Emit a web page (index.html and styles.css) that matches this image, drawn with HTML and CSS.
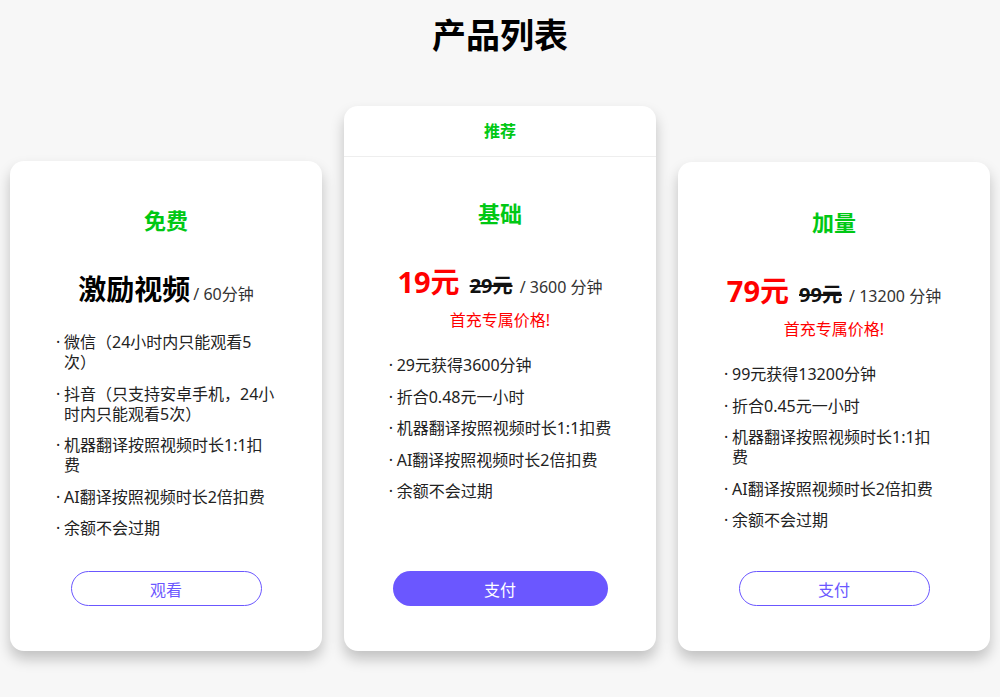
FILE: index.html
```html
<!DOCTYPE html>
<html lang="zh-CN">
<head>
<meta charset="UTF-8">
<meta name="viewport" content="width=device-width, initial-scale=1.0">
<title>产品列表</title>
<link rel="stylesheet" href="styles.css">
</head>
<body>

<h1 class="page-title">产品列表</h1>

<div class="plans">
    <div class="plan">
        <div class="plan-body">
            <h3 class="plan-name">免费</h3>
            <div class="plan-price">
                <span class="plan-reward">激励视频</span><span class="price-unit">/ 60分钟</span>
            </div>
            <ul class="plan-features">
                <li>微信（24小时内只能观看5次）</li>
                <li>抖音（只支持安卓手机，24小时内只能观看5次）</li>
                <li>机器翻译按照视频时长1:1扣费</li>
                <li>AI翻译按照视频时长2倍扣费</li>
                <li>余额不会过期</li>
            </ul>
            <button class="btn btn-outline">观看</button>
        </div>
    </div>

    <div class="plan plan-featured">
        <div class="plan-badge">推荐</div>
        <div class="plan-body">
            <h3 class="plan-name">基础</h3>
            <div class="plan-price">
                <span class="price-now">19元</span><span class="price-old">29元</span><span class="price-unit"> / 3600 分钟</span>
            </div>
            <div class="plan-note">首充专属价格!</div>
            <ul class="plan-features">
                <li>29元获得3600分钟</li>
                <li>折合0.48元一小时</li>
                <li>机器翻译按照视频时长1:1扣费</li>
                <li>AI翻译按照视频时长2倍扣费</li>
                <li>余额不会过期</li>
            </ul>
            <button class="btn btn-solid">支付</button>
        </div>
    </div>

    <div class="plan plan-plus">
        <div class="plan-body">
            <h3 class="plan-name">加量</h3>
            <div class="plan-price">
                <span class="price-now">79元</span><span class="price-old">99元</span><span class="price-unit"> / 13200 分钟</span>
            </div>
            <div class="plan-note">首充专属价格!</div>
            <ul class="plan-features">
                <li>99元获得13200分钟</li>
                <li>折合0.45元一小时</li>
                <li>机器翻译按照视频时长1:1扣费</li>
                <li>AI翻译按照视频时长2倍扣费</li>
                <li>余额不会过期</li>
            </ul>
            <button class="btn btn-outline">支付</button>
        </div>
    </div>
</div>

</body>
</html>
```

FILE: styles.css
```css
body {
    font-family: "Noto Sans", "Noto Sans CJK SC", sans-serif;
    background-color: #f7f7f7;
    color: #222;
    margin: 0;
    padding: 0;
    text-spacing-trim: space-all;
}
.page-title {
    margin: 13px 0 0;
    font-size: 34px;
    line-height: 44px;
    font-weight: bold;
    color: #000;
    text-align: center;
}
.plans {
    display: flex;
    align-items: flex-end;
    gap: 22px;
    padding: 0 10px 46px;
    margin-top: 49px;
}
.plan {
    width: 312px;
    flex-shrink: 0;
    background-color: #fff;
    border-radius: 14px;
    box-shadow: 0 8px 14px rgba(0, 0, 0, 0.22);
}
.plan-badge {
    height: 50px;
    line-height: 50px;
    border-bottom: 1px solid #eee;
    text-align: center;
    font-size: 16px;
    font-weight: 600;
    color: #00c814;
}
.plan-body {
    height: 490px;
    box-sizing: border-box;
    padding: 44px 0 45px;
    display: flex;
    flex-direction: column;
    align-items: center;
}
.plan-featured .plan-body {
    height: 494px;
    padding-top: 41px;
}
.plan-plus .plan-body {
    height: 489px;
    padding-top: 45px;
}
.plan-name {
    margin: 0;
    font-size: 22px;
    line-height: 30px;
    font-weight: bold;
    color: #00c814;
}
.plan-price {
    margin-top: 34px;
    height: 40px;
    line-height: 40px;
    white-space: nowrap;
}
.plan-reward {
    font-size: 28px;
    font-weight: bold;
    color: #000;
}
.price-now {
    font-size: 29px;
    font-weight: bold;
    color: #ff0000;
    margin-right: 10px;
}
.price-old {
    font-size: 20px;
    font-weight: bold;
    color: #111;
    text-decoration: line-through;
}
.price-unit {
    font-size: 16px;
    color: #333;
    margin-left: 3px;
}
.plan-note {
    margin-top: 8px;
    height: 20px;
    font-size: 16px;
    line-height: 20px;
    color: #ff0000;
}
.plan-features {
    list-style: none;
    margin: 23px 0 0;
    padding: 0;
    width: 220px;
}
.plan-featured .plan-features,
.plan-plus .plan-features {
    margin-top: 25px;
}
.plan-featured .plan-features {
    width: auto;
}
.plan-features li {
    display: flex;
    font-size: 16px;
    line-height: 20px;
    margin-bottom: 11.5px;
}
.plan-features li::before {
    content: "·";
    flex: 0 0 8px;
}
.btn {
    margin-top: auto;
    height: 35px;
    border-radius: 18px;
    font-family: inherit;
    font-size: 16px;
    cursor: pointer;
}
.btn-outline {
    width: 191px;
    background-color: #fff;
    color: #6b57ff;
    border: 1px solid #6b57ff;
}
.btn-solid {
    width: 215px;
    background-color: #6b57ff;
    color: #fff;
    border: none;
}
.btn-solid:hover {
    background-color: #5a45f0;
}
```
